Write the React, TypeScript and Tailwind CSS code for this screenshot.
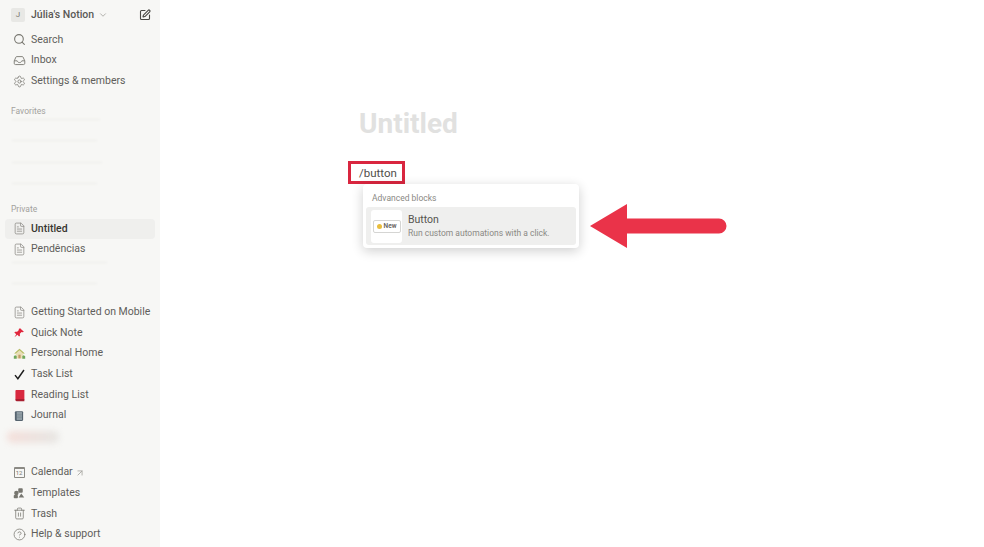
import { Search, Settings, FileText, SquarePen, ChevronDown, ArrowUpRight, Trash2, CircleHelp } from 'lucide-react';
import type { ReactNode } from 'react';

function InboxIcon() {
  return (
    <svg viewBox="0 0 16 16" className="w-[13px] h-[13px] text-[#77766f]" fill="none" stroke="currentColor" strokeWidth="1.1">
      <path d="M1.5 8.500 3.600 3.800c.2-.4.5-.6 1-.6h6.800c.5 0 .8.2 1 .6l2.100 4.700v3c0 .9-.6 1.500-1.500 1.500H3c-.9 0-1.500-.6-1.500-1.500z" />
      <path d="M1.700 8.400h3.400c.3 1.300 1.400 2.100 2.900 2.100s2.600-.8 2.900-2.100h3.400" />
    </svg>
  );
}

function PinIcon() {
  return (
    <svg viewBox="0 0 16 16" className="w-[12px] h-[12px]">
      <path d="M9.500 1.500 14.500 6.200 13 7l-1.600-.4-2.300 2.500.2 2.700-1.200 1-2.200-2.600L2 13.600l2.300-4-2.500-2.200 1-1.200 2.700.2L7.900 4 7.600 2.600z" fill="#e0263c" />
    </svg>
  );
}

function HomeIcon() {
  return (
    <svg viewBox="0 0 16 16" className="w-[13px] h-[13px]">
      <path d="M8 2 1.500 8h2v6h9V8h2z" fill="#eadfb8" />
      <path d="M8 2 1.500 8h2L8 4l4.500 4h2z" fill="#b3bd66" />
      <rect x="6.600" y="9.500" width="2.800" height="4.500" fill="#c29a66" />
      <path d="M1 14.500h3.500V11L2.500 10.200 1 11.500zM11.500 14.500H15V11.500l-1.800-1.300-1.700 1z" fill="#6fa85c" />
    </svg>
  );
}

function CheckIcon() {
  return (
    <svg viewBox="0 0 16 16" className="w-[13px] h-[13px]" fill="none" stroke="#1f1f1f" strokeWidth="1.800">
      <path d="M2.500 8.800 6 13.200 13.500 2.500" />
    </svg>
  );
}

function RedBookIcon() {
  return (
    <svg viewBox="0 0 16 16" className="w-[13px] h-[13px]">
      <path d="M3 2.500C3 1.700 3.600 1.200 4.400 1.200H14v11.600H4.500c-.9 0-1.500.4-1.500 1.200z" fill="#d8293f" />
      <path d="M3 13.600c0-.8.6-1.200 1.500-1.200H14V15H4.500C3.600 15 3 14.400 3 13.600z" fill="#a81f30" />
    </svg>
  );
}

function JournalIcon() {
  return (
    <svg viewBox="0 0 16 16" className="w-[12px] h-[12px]">
      <rect x="2.500" y="1.500" width="11" height="13" rx="1.500" fill="#56646f" />
      <rect x="5" y="3" width="7" height="10" fill="#a3afb6" />
      <path d="M5 5.500h7M5 8h7M5 10.500h7" stroke="#56646f" strokeWidth="0.800" />
    </svg>
  );
}

function CalendarIcon() {
  return (
    <div className="w-[11px] h-[11px] border border-[#8b8a84] rounded-[1px] border-t-[2px] flex items-center justify-center text-[6px] leading-none text-[#77766f]">
      12
    </div>
  );
}

function TemplatesIcon() {
  return (
    <svg viewBox="0 0 16 16" className="w-[12px] h-[12px]" fill="#77766f">
      <rect x="7" y="1.500" width="6" height="6" rx="1.200" />
      <circle cx="4.500" cy="8" r="3" />
      <path d="M11 8.500 15 14H7.500z" />
      <rect x="1" y="10.500" width="5.500" height="4.500" rx="1" />
    </svg>
  );
}

const lucideClass = 'w-[13px] h-[13px] text-[#77766f]';
const pageClass = 'w-[13px] h-[13px] text-[#8b8a84]';

function Row({ icon, label, active }: { icon: ReactNode; label: ReactNode; active?: boolean }) {
  return (
    <div
      className={`flex items-center h-[20.7px] mx-[5px] pl-[7px] rounded-[4px] ${
        active ? 'bg-[#efefed] text-[#37352f] font-medium' : 'text-[#5f5e5b]'
      }`}
    >
      <div className="w-[14px] h-[14px] flex items-center justify-center shrink-0">{icon}</div>
      <div className="ml-[5px] whitespace-nowrap">{label}</div>
    </div>
  );
}

function Faint({ w, ml = 'ml-[12px]', mt }: { w: string; ml?: string; mt: string }) {
  return <div className={`h-[1px] bg-[#ecece9] blur-[1px] ${w} ${ml} ${mt}`} />;
}

export default function App() {
  return (
    <div
      className="flex w-[984px] h-[547px] overflow-hidden bg-white text-[10.5px] leading-none"
      style={{ fontFamily: 'Roboto, "Liberation Sans", sans-serif' }}
    >
      <aside className="w-[160px] h-full shrink-0 bg-[#f7f7f5] flex flex-col">
        <div className="flex items-center h-[30px] pl-[11px] pr-[9px]">
          <div className="w-[14px] h-[14px] rounded-[2px] bg-[#e8e8e5] flex items-center justify-center text-[8px] text-[#77766f]">J</div>
          <div className="ml-[6px] font-medium text-[#5a5955]">Júlia's Notion</div>
          <ChevronDown className="w-[10px] h-[10px] ml-[4px] text-[#a5a49f]" />
          <SquarePen className="w-[12px] h-[12px] ml-auto text-[#4a4945]" strokeWidth={2.2} />
        </div>

        <div className="mt-[-0.5px]">
          <Row icon={<Search className={lucideClass} />} label="Search" />
          <Row icon={<InboxIcon />} label="Inbox" />
          <Row icon={<Settings className={lucideClass} strokeWidth={1.4} />} label="Settings & members" />
        </div>

        <div className="ml-[11px] mt-[15px] text-[8.5px] text-[#a3a29d]">Favorites</div>
        <Faint w="w-[88px]" mt="mt-[4px]" />
        <Faint w="w-[85px]" mt="mt-[20px]" />
        <Faint w="w-[90px]" mt="mt-[21px]" />
        <Faint w="w-[85px]" mt="mt-[20px]" />

        <div className="ml-[11px] mt-[21px] text-[8.5px] text-[#a3a29d]">Private</div>
        <div className="mt-[5px]">
          <Row active icon={<FileText className={pageClass} strokeWidth={1.4} />} label="Untitled" />
          <Row icon={<FileText className={pageClass} strokeWidth={1.4} />} label="Pendências" />
        </div>
        <Faint w="w-[95px]" mt="mt-[2px]" />
        <Faint w="w-[85px]" mt="mt-[20px]" />

        <div className="mt-[18px]">
          <Row icon={<FileText className={pageClass} strokeWidth={1.4} />} label="Getting Started on Mobile" />
          <Row icon={<PinIcon />} label="Quick Note" />
          <Row icon={<HomeIcon />} label="Personal Home" />
          <Row icon={<CheckIcon />} label="Task List" />
          <Row icon={<RedBookIcon />} label="Reading List" />
          <Row icon={<JournalIcon />} label="Journal" />
        </div>

        <div className="w-[52px] h-[12px] ml-[7px] mt-[5px] rounded-full bg-gradient-to-r from-[#f4dfda] to-[#e6e5e2] blur-[3px]" />

        <div className="mt-auto pb-[2px]">
          <Row
            icon={<CalendarIcon />}
            label={
              <span className="flex items-center">
                Calendar
                <ArrowUpRight className="w-[10px] h-[10px] ml-[2px] text-[#a5a49f]" />
              </span>
            }
          />
          <Row icon={<TemplatesIcon />} label="Templates" />
          <Row icon={<Trash2 className={lucideClass} strokeWidth={1.4} />} label="Trash" />
          <Row icon={<CircleHelp className={lucideClass} strokeWidth={1.4} />} label="Help & support" />
        </div>
      </aside>

      <main className="flex-1 pl-[188px] pt-[107px]">
        <h1 className="pl-[11px] h-[54px] text-[28px] leading-[33px] font-bold text-[#e1e1e0]">Untitled</h1>
        <div className="w-[57px] h-[23px] border-[3px] border-[#d9263f] flex items-center pl-[8px] pt-[3px] text-[11.5px] text-[#4f4e4a]">
          /button
        </div>
        <div className="flex items-start ml-[15px]">
          <div className="w-[216px] h-[64px] shrink-0 rounded-[4px] bg-white shadow-[0_3px_12px_rgba(15,15,15,0.2)] px-[3px]">
            <div className="h-[23px] flex items-center pl-[6px] pt-[5px] text-[8.5px] text-[#8a8984]">Advanced blocks</div>
            <div className="h-[38px] flex items-center rounded-[3px] bg-[#efefee] pl-[5px]">
              <div className="w-[31px] h-[33px] rounded-[3px] bg-white flex items-center justify-center">
                <div className="w-[28px] h-[13px] rounded-[2px] border border-[#d5d5d3] flex items-center justify-center gap-[2px]">
                  <div className="w-[5px] h-[5px] rounded-full bg-[#e9bd3c]" />
                  <span className="text-[6.5px] font-semibold text-[#5f5e5b]">New</span>
                </div>
              </div>
              <div className="ml-[6px]">
                <div className="text-[10.5px] text-[#55544f]">Button</div>
                <div className="mt-[3px] text-[8.5px] text-[#8a8984] whitespace-nowrap">Run custom automations with a click.</div>
              </div>
            </div>
          </div>
          <svg viewBox="0 0 137 44" className="w-[137px] h-[44px] ml-[11px] mt-[20px] shrink-0">
            <path d="M0 22 37 0v14.500h92a7.500 7.500 0 0 1 0 15H37V44z" fill="#ea3349" />
          </svg>
        </div>
      </main>
    </div>
  );
}
